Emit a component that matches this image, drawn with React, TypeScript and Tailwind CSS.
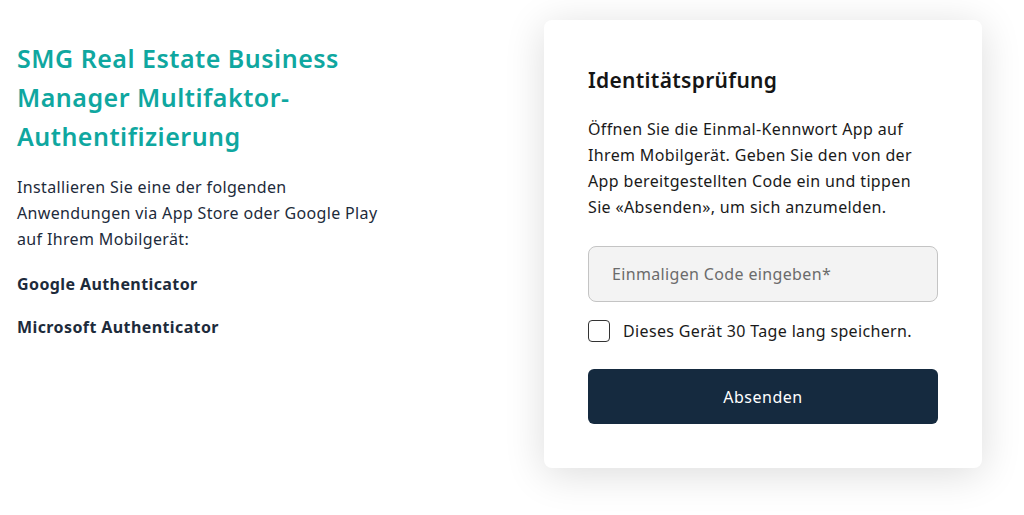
import React from "react";

// MFA login screen: intro text on the left, verification card on the right.
const APPS = ["Google Authenticator", "Microsoft Authenticator"];

export default function App() {
  return (
    <div
      className="min-h-[515px] w-full bg-white flex items-start tracking-[0.35px]"
      style={{ fontFamily: '"Noto Sans", "Open Sans", sans-serif' }}
    >
      {/* Intro column */}
      <div className="ml-[17px] mt-[39px] w-[380px] text-[#1d2b3b]">
        <h1 className="text-[25px] leading-[39px] font-semibold tracking-[0.5px] text-[#0fa7a0]">
          SMG Real Estate Business
          <br />
          Manager Multifaktor-
          <br />
          Authentifizierung
        </h1>
        <p className="mt-[18px] text-[16px] leading-[26px]">
          Installieren Sie eine der folgenden
          <br />
          Anwendungen via App Store oder Google Play
          <br />
          auf Ihrem Mobilgerät:
        </p>
        {APPS.map((a, i) => (
          <p
            key={a}
            className={`${i === 0 ? "mt-[19px]" : "mt-[17px]"} text-[16px] leading-[26px] font-bold tracking-[0.4px]`}
          >
            {a}
          </p>
        ))}
      </div>

      {/* Verification card */}
      <div className="ml-auto mr-[42px] mt-[20px] w-[438px] rounded-[8px] bg-white px-[44px] pt-[44px] pb-[44px] shadow-[0_6px_40px_rgba(0,0,0,0.14)]">
        <h2 className="text-[21px] leading-[32px] font-semibold tracking-[0.3px] text-[#151515]">
          Identitätsprüfung
        </h2>
        <p className="mt-[20px] text-[16px] leading-[26px] text-[#1a1a1a]">
          Öffnen Sie die Einmal-Kennwort App auf
          <br />
          Ihrem Mobilgerät. Geben Sie den von der
          <br />
          App bereitgestellten Code ein und tippen
          <br />
          Sie «Absenden», um sich anzumelden.
        </p>
        <input
          type="text"
          placeholder="Einmaligen Code eingeben*"
          className="mt-[26px] block h-[56px] w-full rounded-[8px] border border-[#c4c4c4] bg-[#f3f3f3] px-[23px] text-[16px] tracking-[0.35px] text-[#222] placeholder:text-[#6b6b6b] outline-none"
        />
        <label className="mt-[18px] flex items-center gap-[13px] text-[16px] leading-[22px] text-[#1a1a1a]">
          <span className="h-[22px] w-[22px] shrink-0 rounded-[4px] border-[1.5px] border-[#333] bg-white" />
          Dieses Gerät 30 Tage lang speichern.
        </label>
        <button
          type="button"
          className="mt-[27px] block h-[55px] w-full rounded-[6px] bg-[#152a3f] text-[16px] tracking-[0.5px] text-white"
        >
          Absenden
        </button>
      </div>
    </div>
  );
}
